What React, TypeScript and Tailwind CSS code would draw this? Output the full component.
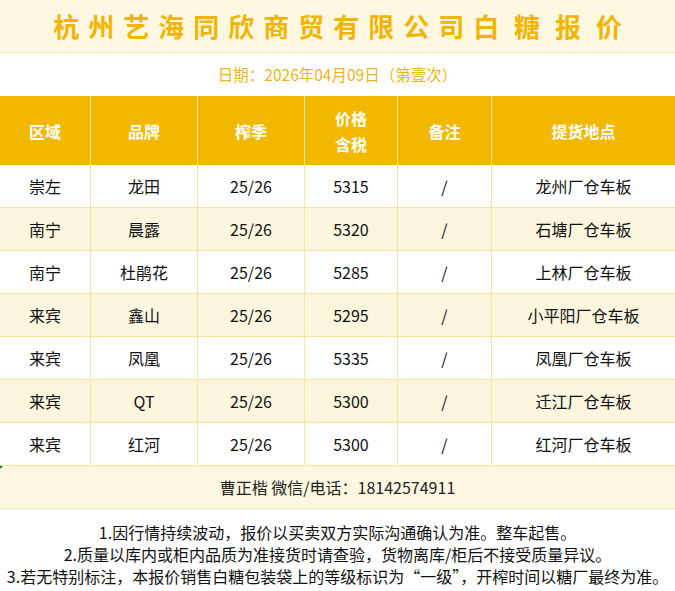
import React from "react";

const rows = [
  ["崇左", "龙田", "25/26", "5315", "/", "龙州厂仓车板"],
  ["南宁", "晨露", "25/26", "5320", "/", "石塘厂仓车板"],
  ["南宁", "杜鹃花", "25/26", "5285", "/", "上林厂仓车板"],
  ["来宾", "鑫山", "25/26", "5295", "/", "小平阳厂仓车板"],
  ["来宾", "凤凰", "25/26", "5335", "/", "凤凰厂仓车板"],
  ["来宾", "QT", "25/26", "5300", "/", "迁江厂仓车板"],
  ["来宾", "红河", "25/26", "5300", "/", "红河厂仓车板"],
];

export default function App() {
  return (
    <div
      className="w-[675px] bg-white text-[#111]"
      style={{ fontFamily: '"Noto Sans CJK SC", "Noto Sans", sans-serif' }}
    >
      <div className="h-[53px] bg-[#fef7e1] border-b border-[#fbe6a6] flex items-center justify-center">
        <div className="text-[26px] font-bold text-[#f1b500] tracking-[9px] [word-spacing:-9px] leading-none pl-[9px]">
          杭州艺海同欣商贸有限公司白 糖 报 价
        </div>
      </div>
      <div className="h-[43px] flex items-center justify-center text-[15.5px] text-[#e9b520]">
        日期：2026年04月09日（第壹次）
      </div>
      <div className="grid grid-cols-[91px_107px_107px_93px_94px_183px]">
        {["区域", "品牌", "榨季", "价格\n含税", "备注", "提货地点"].map((h, i) => (
          <div
            key={i}
            className={`h-[69px] bg-[#f2b800] text-white font-bold text-[16px] flex items-center justify-center text-center whitespace-pre-line leading-[26px] ${
              i < 5 ? "border-r border-[#fde7a3]" : ""
            }`}
          >
            {h}
          </div>
        ))}
        {rows.map((r, ri) =>
          r.map((c, ci) => (
            <div
              key={`${ri}-${ci}`}
              className={`h-[43px] border-b border-[#fce39a] flex items-center justify-center text-[16px] ${
                ci < 5 ? "border-r" : ""
              } ${ri % 2 === 1 ? "bg-[#fdf6de]" : "bg-white"}`}
            >
              {c}
            </div>
          ))
        )}
      </div>
      <div className="relative h-[43px] bg-[#fdf6e0] border-b border-[#fce39a] flex items-center justify-center text-[16px] text-[#222]">
        <span className="absolute left-0 top-0 w-0 h-0 border-t-[3px] border-r-[3px] border-t-[#0a7a0a] border-r-transparent" />
        曹正楷 微信/电话：18142574911
      </div>
      <div className="pt-[12px] pb-[5px] flex flex-col items-center text-[16px] leading-[22px] text-[#111] whitespace-nowrap">
        <div>1.因行情持续波动，报价以买卖双方实际沟通确认为准。整车起售。</div>
        <div>2.质量以库内或柜内品质为准接货时请查验，货物离库/柜后不接受质量异议。</div>
        <div>3.若无特别标注，本报价销售白糖包装袋上的等级标识为“一级”，开榨时间以糖厂最终为准。</div>
      </div>
    </div>
  );
}
